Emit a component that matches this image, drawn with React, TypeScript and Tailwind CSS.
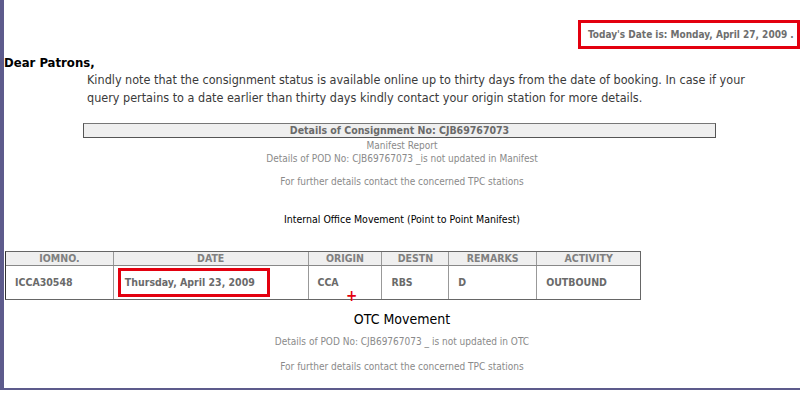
// App.tsx — consignment status page
const sans = { fontFamily: '"DejaVu Sans Condensed", "DejaVu Sans", sans-serif' };

const cols = [
  { head: 'IOMNO.', value: 'ICCA30548', w: 'w-[107px]' },
  { head: 'DATE', value: 'Thursday, April 23, 2009', w: 'w-[195px]', boxed: true },
  { head: 'ORIGIN', value: 'CCA', w: 'w-[74px]' },
  { head: 'DESTN', value: 'RBS', w: 'w-[67px]' },
  { head: 'REMARKS', value: 'D', w: 'w-[88px]' },
  { head: 'ACTIVITY', value: 'OUTBOUND', w: 'w-[104px]' },
];

function GrayNote({ children, className = '' }: { children: React.ReactNode; className?: string }) {
  return <p className={`text-center text-[10px] leading-[12px] text-[#8a8a8a] ${className}`}>{children}</p>;
}

export default function App() {
  return (
    <div className="w-[800px] h-[398px] bg-white overflow-hidden" style={sans}>
      <div className="h-[390px] border-l-[4px] border-b-[2px] border-[#5d5b8c] flex flex-col">
        {/* Today's date */}
        <div className="flex justify-end pt-[20px]">
          <div className="w-[222px] h-[29px] border-[3px] border-[#e3000f] pl-[7px] flex items-center text-[10px] font-bold text-[#6e6e6e] whitespace-nowrap">
            Today's Date is: Monday, April 27, 2009 .
          </div>
        </div>

        {/* Intro */}
        <p className="mt-[6px] text-[13px] leading-[16px] font-bold text-black">Dear Patrons,</p>
        <p className="ml-[83px] mr-[40px] text-[12.5px] leading-[18px] text-[#3a3a3a]">
          Kindly note that the consignment status is available online up to thirty days from the date of booking. In case if your
          query pertains to a date earlier than thirty days kindly contact your origin station for more details.
        </p>

        {/* Consignment header */}
        <div className="mt-[16px] ml-[79px] w-[633px] h-[15px] border border-[#555] border-t-[#777] bg-[#efefef] flex items-center justify-center text-[10.5px] font-bold text-[#6a6a6a]">
          Details of Consignment No: CJB69767073
        </div>
        <GrayNote className="mt-[2px]">Manifest Report</GrayNote>
        <GrayNote className="mt-[1px]">Details of POD No: CJB69767073 _is not updated in Manifest</GrayNote>
        <GrayNote className="mt-[11px]">For further details contact the concerned TPC stations</GrayNote>

        <p className="mt-[25px] text-center text-[10.5px] leading-[12px] text-black">
          Internal Office Movement (Point to Point Manifest)
        </p>

        {/* Movement table */}
        <div className="mt-[26px] ml-[1px] flex flex-col w-[636px] border border-[#666] border-l-[#333]">
          <div className="flex bg-[#efefef] border-b border-[#888]">
            {cols.map((c, i) => (
              <div
                key={c.head}
                className={`${c.w} h-[13px] flex items-center justify-center text-[10.5px] font-bold text-[#808080] ${i > 0 ? 'border-l border-[#999]' : ''}`}
              >
                {c.head}
              </div>
            ))}
          </div>
          <div className="flex bg-white">
            {cols.map((c, i) => (
              <div
                key={c.head}
                className={`${c.w} h-[33px] flex items-center text-[10.5px] font-bold text-[#6a6a6a] ${i > 0 ? 'border-l border-[#999]' : ''} ${c.boxed ? 'pl-[4px]' : 'pl-[9px]'}`}
              >
                {c.boxed ? (
                  <div className="w-[152px] h-[29px] border-[3px] border-[#e3000f] pl-[4px] flex items-center">{c.value}</div>
                ) : (
                  c.value
                )}
              </div>
            ))}
          </div>
        </div>

        {/* OTC */}
        <div className="relative">
          <span className="absolute left-[342px] top-[-11px] text-[#e3000f] text-[15px] leading-[15px] font-bold">+</span>
        </div>
        <p className="mt-[11px] text-center text-[14px] leading-[16px] text-black">OTC Movement</p>
        <GrayNote className="mt-[9px]">Details of POD No: CJB69767073 _ is not updated in OTC</GrayNote>
        <GrayNote className="mt-[13px]">For further details contact the concerned TPC stations</GrayNote>
      </div>
    </div>
  );
}
